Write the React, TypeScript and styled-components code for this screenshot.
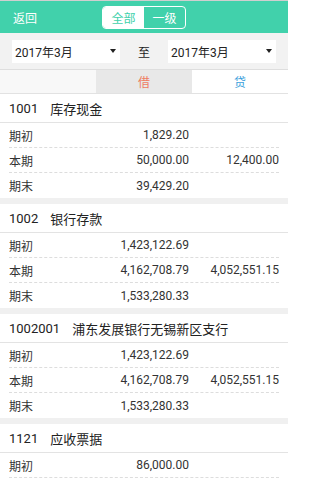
import React from "react";
import styled, { createGlobalStyle } from "styled-components";

const GlobalStyle = createGlobalStyle`
  html, body {
    margin: 0;
    padding: 0;
    width: 288px;
    height: 480px;
    overflow: hidden;
    background: #ffffff;
    font-family: Roboto, "Noto Sans CJK SC", sans-serif;
  }
  * { box-sizing: border-box; }
`;

const Page = styled.div`
  width: 288px;
  border-top: 1px solid #cfcfcf;
`;

const TopBar = styled.div`
  height: 32px;
  background: #41d1ab;
  display: grid;
  grid-template-columns: 1fr auto 1fr;
  align-items: center;
  padding: 0 13px;
`;

const BackButton = styled.span`
  color: #ffffff;
  font-size: 12px;
`;

const Segmented = styled.div`
  display: flex;
  border: 1px solid #ffffff;
  border-radius: 4px;
  overflow: hidden;
  height: 23px;
`;

const Segment = styled.div<{ $active?: boolean }>`
  width: 41px;
  display: flex;
  align-items: center;
  justify-content: center;
  font-size: 12px;
  background: ${(p) => (p.$active ? "#ffffff" : "transparent")};
  color: ${(p) => (p.$active ? "#41d1ab" : "#ffffff")};
`;

const DateBar = styled.div`
  height: 37px;
  background: #f2f2f2;
  border-bottom: 1px solid #dedede;
  display: grid;
  grid-template-columns: 108px 1fr 108px;
  align-items: center;
  padding: 0 12px;
`;

const DateSelect = styled.div`
  height: 23px;
  background: #ffffff;
  display: flex;
  align-items: center;
  justify-content: space-between;
  padding: 0 4px 0 3px;
  font-size: 12px;
  color: #222222;
`;

const Caret = styled.span`
  width: 0;
  height: 0;
  border-left: 3.5px solid transparent;
  border-right: 3.5px solid transparent;
  border-top: 4px solid #222222;
`;

const ToLabel = styled.span`
  text-align: center;
  font-size: 12px;
  color: #222222;
`;

const ColumnHeader = styled.div`
  height: 24px;
  display: grid;
  grid-template-columns: 96px 96px 96px;
  border-bottom: 1px solid #e2e2e2;
`;

const HeaderCell = styled.div<{ $bg: string; $color?: string }>`
  background: ${(p) => p.$bg};
  color: ${(p) => p.$color || "#333"};
  display: flex;
  align-items: center;
  justify-content: center;
  font-size: 12px;
`;

const Section = styled.div`
  & + & {
    border-top: 6px solid #f0f0f0;
  }
`;

const SectionTitle = styled.div`
  height: 29px;
  display: flex;
  align-items: center;
  padding: 0 9px;
  font-size: 13px;
  color: #222222;
  border-bottom: 1px solid #e3e3e3;
`;

const Code = styled.span`
  margin-right: 12px;
`;

const Rows = styled.div<{ $open?: boolean }>`
  padding: 0 9px;
  & > div:last-child {
    border-bottom: ${(p) => (p.$open ? "1px dashed #dddddd" : "none")};
  }
`;

const Row = styled.div`
  height: 25px;
  display: grid;
  grid-template-columns: 60px 120px 90px;
  align-items: center;
  font-size: 12px;
  color: #333333;
  border-bottom: 1px dashed #dddddd;
`;

const Amount = styled.span`
  text-align: right;
`;

type Entry = { label: string; debit?: string; credit?: string };
type Account = { code: string; name: string; rows: Entry[]; open?: boolean };

const accounts: Account[] = [
  {
    code: "1001",
    name: "库存现金",
    rows: [
      { label: "期初", debit: "1,829.20" },
      { label: "本期", debit: "50,000.00", credit: "12,400.00" },
      { label: "期末", debit: "39,429.20" },
    ],
  },
  {
    code: "1002",
    name: "银行存款",
    rows: [
      { label: "期初", debit: "1,423,122.69" },
      { label: "本期", debit: "4,162,708.79", credit: "4,052,551.15" },
      { label: "期末", debit: "1,533,280.33" },
    ],
  },
  {
    code: "1002001",
    name: "浦东发展银行无锡新区支行",
    rows: [
      { label: "期初", debit: "1,423,122.69" },
      { label: "本期", debit: "4,162,708.79", credit: "4,052,551.15" },
      { label: "期末", debit: "1,533,280.33" },
    ],
  },
  {
    code: "1121",
    name: "应收票据",
    open: true,
    rows: [{ label: "期初", debit: "86,000.00" }],
  },
];

export default function App() {
  return (
    <>
      <GlobalStyle />
      <Page>
        <TopBar>
          <BackButton>返回</BackButton>
          <Segmented>
            <Segment $active>全部</Segment>
            <Segment>一级</Segment>
          </Segmented>
          <span />
        </TopBar>
        <DateBar>
          <DateSelect>
            <span>2017年3月</span>
            <Caret />
          </DateSelect>
          <ToLabel>至</ToLabel>
          <DateSelect>
            <span>2017年3月</span>
            <Caret />
          </DateSelect>
        </DateBar>
        <ColumnHeader>
          <HeaderCell $bg="#f8f8f8" />
          <HeaderCell $bg="#e8e8e8" $color="#ef7b62">借</HeaderCell>
          <HeaderCell $bg="#ffffff" $color="#3b9fdc">贷</HeaderCell>
        </ColumnHeader>
        {accounts.map((a) => (
          <Section key={a.code}>
            <SectionTitle>
              <Code>{a.code}</Code>
              <span>{a.name}</span>
            </SectionTitle>
            <Rows $open={a.open}>
              {a.rows.map((r) => (
                <Row key={r.label}>
                  <span>{r.label}</span>
                  <Amount>{r.debit}</Amount>
                  <Amount>{r.credit}</Amount>
                </Row>
              ))}
            </Rows>
          </Section>
        ))}
      </Page>
    </>
  );
}
